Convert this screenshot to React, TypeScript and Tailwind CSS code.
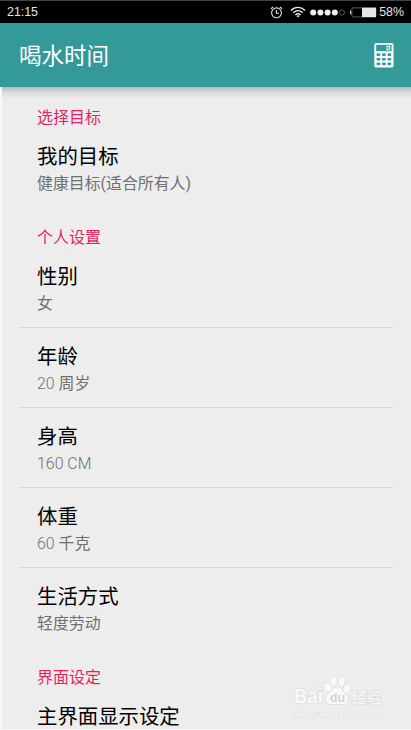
import React from "react";

type Item = { title: string; value?: string; amount?: string };
type Group = { heading: string; items: Item[] };

const groups: Group[] = [
  { heading: "选择目标", items: [{ title: "我的目标", value: "健康目标(适合所有人)" }] },
  {
    heading: "个人设置",
    items: [
      { title: "性别", value: "女" },
      { title: "年龄", amount: "20 ", value: "周岁" },
      { title: "身高", amount: "160 CM" },
      { title: "体重", amount: "60 ", value: "千克" },
      { title: "生活方式", value: "轻度劳动" },
    ],
  },
  { heading: "界面设定", items: [{ title: "主界面显示设定" }] },
];

function AlarmIcon() {
  return (
    <svg width="13" height="13" viewBox="0 0 13 13" fill="none" stroke="#e2e2e2" strokeWidth="1.1">
      <circle cx="6.5" cy="6.8" r="4.9" />
      <path d="M6.4 4v3.3h2.5M0.9 2.9 3 1M12.1 2.9 10 1" />
    </svg>
  );
}

function WifiIcon() {
  return (
    <svg width="16" height="12" viewBox="0 0 16 12" fill="none" stroke="#e8e8e8" strokeWidth="1.4">
      <path d="M1 4.4C5 .4 11 .4 15 4.4M3.3 6.7c2.8-2.7 6.6-2.7 9.4 0M5.4 8.9c1.6-1.5 3.6-1.5 5.2 0" />
      <path d="M6.5 9.9 8 11.5l1.5-1.6c-.9-.8-2.1-.8-3 0Z" fill="#e8e8e8" stroke="none" />
    </svg>
  );
}

function SignalDots() {
  return (
    <svg width="36" height="7" viewBox="0 0 36 7">
      {[3.2, 10.4, 17.6, 24.8].map((x) => (
        <circle key={x} cx={x} cy="3.5" r="3" fill="#eeeeee" />
      ))}
      <circle cx="32" cy="3.5" r="2.6" fill="none" stroke="#5b5b5b" strokeWidth="0.9" />
    </svg>
  );
}

function BatteryIcon() {
  return (
    <svg width="27" height="11" viewBox="0 0 27 11">
      <rect x="0" y="3.7" width="1.3" height="3.6" fill="#d8d8d8" />
      <rect x="1.9" y="0.9" width="24" height="9" rx="1" fill="none" stroke="#666" strokeWidth="0.9" />
      <rect x="12" y="0.7" width="14" height="9.4" fill="#e6e6e6" />
    </svg>
  );
}

function CalculatorIcon() {
  return (
    <svg width="20" height="26" viewBox="0 0 20 26">
      <rect x="0.3" y="0.9" width="19.2" height="24.7" rx="2.2" fill="#fafffe" />
      <rect x="2.2" y="2.8" width="15.4" height="6.4" fill="#339999" />
      <rect x="13" y="4.2" width="2.7" height="3.5" fill="none" stroke="#fff" strokeWidth="1" />
      {[11.3, 15.9, 20.5].map((y) =>
        [2.6, 8.1, 13.6].map((x) => (
          <rect key={`${x}-${y}`} x={x} y={y} width="3.6" height="2.7" rx="0.7" fill="#339999" />
        ))
      )}
    </svg>
  );
}

function Watermark() {
  return (
    <svg
      width="92"
      height="46"
      viewBox="0 0 92 46"
      className="absolute left-[292px] top-[675px]"
      fill="#f9f9f9"
      stroke="#dadada"
      strokeWidth="1.2"
      fontFamily="'Liberation Sans', 'Noto Sans CJK SC', sans-serif"
      paintOrder="stroke"
    >
      <text x="2" y="28.2" fontSize="19.5" fontWeight="700" textLength="29" lengthAdjust="spacingAndGlyphs">Bai</text>
      <ellipse cx="35.8" cy="12.3" rx="3.5" ry="4.4" transform="rotate(-15 35.8 12.3)" />
      <ellipse cx="41.5" cy="6" rx="3.2" ry="4.5" />
      <ellipse cx="49.7" cy="6.4" rx="3.2" ry="4.5" transform="rotate(10 49.7 6.4)" />
      <ellipse cx="54.9" cy="13.8" rx="3.4" ry="4.4" transform="rotate(18 54.9 13.8)" />
      <path d="M45.3 12.3c4.2 0 5.8 4.4 8.6 7 4.8 4.4 2.3 10.5-3.9 10-3-.3-6.4-.3-9.4 0-6.5.6-9.3-5.6-4.3-10.2 3-2.7 4.8-6.8 9-6.8Z" />
      <text x="38" y="26.7" fontSize="13.5" fontWeight="700" fill="#d4d4d4" stroke="none" textLength="15" lengthAdjust="spacingAndGlyphs">du</text>
      <text x="59.5" y="27.8" fontSize="15" fontWeight="500" textLength="30">经验</text>
      <text x="2" y="41.5" fontSize="8.8" strokeWidth="0.6" textLength="87" lengthAdjust="spacingAndGlyphs" fontFamily="'Liberation Serif', serif">jingyan.baidu.com</text>
    </svg>
  );
}

function Row({ item, divided }: { item: Item; divided: boolean }) {
  return (
    <div className={`ml-[17px] mr-[18px] h-20 border-b pl-[18px] pt-[13px] ${divided ? "border-[#d8d8d8]" : "border-transparent"}`}>
      <div className="h-[31px] text-[20.4px] leading-8 text-black">{item.title}</div>
      <div className="h-6 whitespace-pre text-[15.9px] leading-6 text-[#707070]">
        {item.amount && <span className="font-light">{item.amount}</span>}
        {item.value}
      </div>
    </div>
  );
}

export default function App() {
  return (
    <div className="relative flex h-[730px] w-[411px] flex-col overflow-hidden bg-[#ededed] font-[Roboto,'Noto_Sans_CJK_SC',sans-serif]">
      <header className="flex-none">
        <div className="flex h-[23px] items-center border-t border-[#444] bg-black pl-[7px] pr-[7px] font-['Liberation_Sans',sans-serif] text-[12.4px] leading-none text-[#e6e6e6]">
          <span className="flex-1">21:15</span>
          <AlarmIcon />
          <span className="ml-[7px]"><WifiIcon /></span>
          <span className="ml-[4px]"><SignalDots /></span>
          <span className="ml-[4px]"><BatteryIcon /></span>
          <span className="ml-[2px]">58%</span>
        </div>
        <div className="flex h-16 items-center justify-between bg-[#339999] pl-[19px] pr-[17px]">
          <h1 className="pt-px text-[22.5px] font-normal leading-8 text-white">喝水时间</h1>
          <CalculatorIcon />
        </div>
      </header>
      <main className="min-h-0 flex-1 overflow-hidden border-l-2 border-[#f7f7f7]">
        <div className="-mb-[11px] h-3 bg-linear-to-b from-[#b9b9b9] via-[#dddddd] to-[#ededed]" />
        {groups.map((group) => (
          <section key={group.heading}>
            <h2 className="h-10 pl-[35px] pt-[18px] text-[16px] font-normal leading-6 text-[#e91e63]">{group.heading}</h2>
            {group.items.map((item, i) => (
              <Row key={item.title} item={item} divided={i < group.items.length - 1} />
            ))}
          </section>
        ))}
      </main>
      <Watermark />
      <div className="h-px flex-none bg-[#fafafa]" />
    </div>
  );
}
